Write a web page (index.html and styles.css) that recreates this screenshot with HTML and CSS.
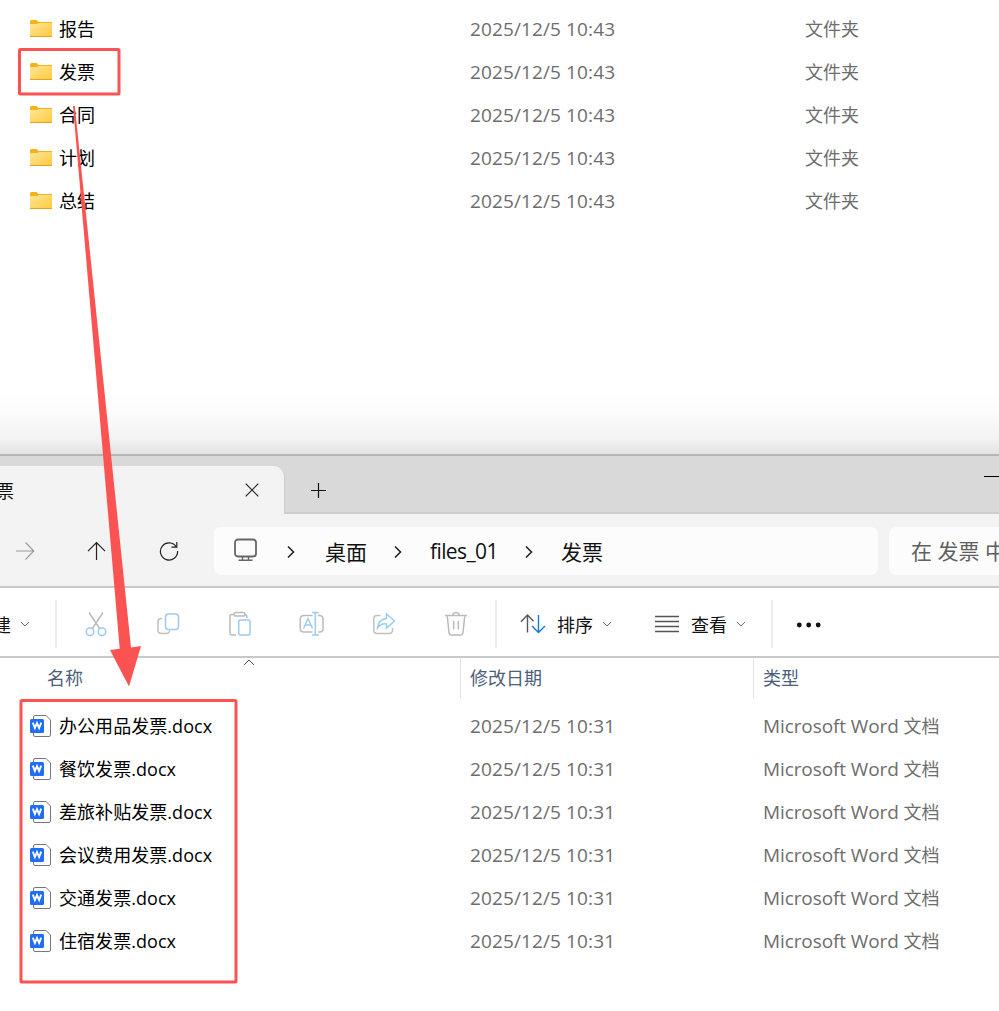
FILE: index.html
```
<!DOCTYPE html>
<html lang="zh-CN">
<head>
    <meta charset="UTF-8">
    <meta name="viewport" content="width=device-width, initial-scale=1.0">
    <title>发票</title>
    <link rel="stylesheet" href="styles.css">
</head>
<body>
<!-- Shared icons -->
<svg class="defs" width="0" height="0">
    <defs>
        <linearGradient id="folderFill" x1="0" y1="0" x2="1" y2="1">
            <stop offset="0" stop-color="#ffe69b"/>
            <stop offset="1" stop-color="#ffc93a"/>
        </linearGradient>
        <symbol id="folder" viewBox="0 0 22 18">
            <path d="M0 1.5Q0 0 1.5 0H6.5L8.5 2H22V6H0Z" fill="#f5b21b"/>
            <path d="M0 4H7L9 3H22V17H0Z" fill="url(#folderFill)"/>
            <path d="M0 16.5H22" stroke="#e5a21c"/>
        </symbol>
        <symbol id="word" viewBox="0 0 22 22">
            <path d="M3.5 4V2Q3.5 .5 5 .5H16L20.5 5V20Q20.5 21.5 19 21.5H5Q3.5 21.5 3.5 20V18" fill="#fff" stroke="#777"/>
            <rect y="4" width="14" height="14" rx="1.5" fill="#1f6ef5"/>
            <path d="M2.8 7.6L4.9 13L7 8.2L9.1 13L11.2 7.6" fill="none" stroke="#fff" stroke-width="1.9"/>
        </symbol>
        <symbol id="down" viewBox="0 0 10 6">
            <path d="M1 1L5 5L9 1" fill="none" stroke="#666"/>
        </symbol>
        <symbol id="right" viewBox="0 0 8 14">
            <path d="M1 1.5L6.5 7L1 12.5" fill="none" stroke="#222" stroke-width="1.6"/>
        </symbol>
    </defs>
</svg>

<div class="desktop">
    <!-- Parent folder list -->
    <div class="parent-window">
        <div class="row"><div class="name"><svg class="folder"><use href="#folder"/></svg>报告</div><div class="date">2025/12/5 10:43</div><div class="type">文件夹</div></div>
        <div class="row"><div class="name"><svg class="folder"><use href="#folder"/></svg>发票</div><div class="date">2025/12/5 10:43</div><div class="type">文件夹</div></div>
        <div class="row"><div class="name"><svg class="folder"><use href="#folder"/></svg>合同</div><div class="date">2025/12/5 10:43</div><div class="type">文件夹</div></div>
        <div class="row"><div class="name"><svg class="folder"><use href="#folder"/></svg>计划</div><div class="date">2025/12/5 10:43</div><div class="type">文件夹</div></div>
        <div class="row"><div class="name"><svg class="folder"><use href="#folder"/></svg>总结</div><div class="date">2025/12/5 10:43</div><div class="type">文件夹</div></div>
    </div>

    <div class="window">
        <!-- Tabs -->
        <div class="tabs">
            <div class="tab">
                <span class="tab-title">发票</span>
                <svg width="14" height="14" viewBox="0 0 14 14"><path d="M.7 .7L13.3 13.3M13.3 .7L.7 13.3" stroke="#222" stroke-width="1.2"/></svg>
            </div>
            <svg class="new-tab" width="15" height="15" viewBox="0 0 15 15"><path d="M7.5 0V15M0 7.5H15" stroke="#111" stroke-width="1.2"/></svg>
            <span class="minimize"></span>
        </div>

        <!-- Address bar -->
        <div class="nav">
            <div class="nav-button"><svg width="20" height="20" viewBox="0 0 20 20" fill="none" stroke="#999" stroke-width="1.1"><path d="M1 10H18.5M10.5 1.5L18.8 10L10.5 18.5"/></svg></div>
            <div class="nav-button"><svg width="20" height="20" viewBox="0 0 20 20" fill="none" stroke="#222" stroke-width="1.2"><path d="M10.5 19V1.8M2 10.2L10.5 1.7L19 10.2"/></svg></div>
            <div class="nav-button refresh"><svg width="20" height="20" viewBox="0 0 20 20" fill="none" stroke="#222" stroke-width="1.2"><path d="M17.4 6A8.6 8.6 0 1 0 18.6 10M17.8 1V6.2H12.5"/></svg></div>
            <div class="address">
                <svg class="monitor" width="24" height="24" viewBox="0 0 24 24" fill="none" stroke="#666" stroke-width="1.8"><rect x="2" y="1.5" width="21" height="17" rx="3"/><path d="M9.5 18.5V22M15.5 18.5V22M5.5 22.3H19.5" stroke-width="1.4"/></svg>
                <svg class="sep sep-first"><use href="#right"/></svg>
                <span>桌面</span>
                <svg class="sep"><use href="#right"/></svg>
                <span class="latin">files_01</span>
                <svg class="sep"><use href="#right"/></svg>
                <span>发票</span>
            </div>
            <div class="search">在 发票 中搜索</div>
        </div>

        <!-- Toolbar -->
        <div class="toolbar">
            <div class="new"><span>新建</span><svg class="down"><use href="#down"/></svg></div>
            <div class="tools">
                <!-- cut -->
                <svg viewBox="0 0 26 26"><path d="M6 1.5L17 18M20 1.5L9 18" stroke="#bbb"/><circle cx="7" cy="20.8" r="3.8" stroke="#9ccbf0"/><circle cx="19" cy="20.8" r="3.8" stroke="#9ccbf0"/></svg>
                <!-- copy -->
                <svg viewBox="0 0 26 26"><path d="M7 7.5H6Q3 7.5 3 10.5V19Q3 22.5 6.5 22.5H11Q14.5 22.5 14.5 19.5" stroke="#c0c0c0"/><rect x="10.5" y="3" width="13" height="15.5" rx="3" stroke="#9ccbf0"/></svg>
                <!-- paste -->
                <svg viewBox="0 0 26 26"><path d="M9 24H5Q3 24 3 22V5Q3 3.5 5 3.5H7M18 3.5Q20 3.5 20 7" stroke="#bbb"/><rect x="7" y="1.5" width="11" height="3.6" rx="1.8" stroke="#bbb"/><rect x="11.7" y="9" width="11.3" height="15" rx="1.6" stroke="#9ccbf0"/></svg>
                <!-- rename -->
                <svg viewBox="0 0 26 26"><path d="M13.5 4.5H5Q1.3 4.5 1.3 8V18Q1.3 21 5 21H13.5M19 4.5H20.5Q24 4.5 24 8V18Q24 21 20.5 21H19" stroke="#bbb"/><path d="M4.5 17.5L9 7.5L13.5 17.5M6 14H12M13 1.5H20M13 24H20M16.3 1.5V24" stroke="#9ccbf0"/></svg>
                <!-- share -->
                <svg viewBox="0 0 26 26"><path d="M9.5 4.5H6Q2.8 4.5 2.8 8V19Q2.8 22.5 6 22.5H18Q21.5 22.5 21.5 19V17" stroke="#c0c0c0"/><path d="M15.5 3L23.5 10L15.5 17V13Q10 12 6.5 17Q7 8.5 15.5 7.5Z" stroke="#9ccbf0"/></svg>
                <!-- delete -->
                <svg viewBox="0 0 26 26"><path d="M2 4.5H24M9.5 4.5Q10 1.5 13 1.5T16.5 4.5M4.2 4.5L6 21.5Q6.3 24 8.5 24H17.5Q19.7 24 20 21.5L21.8 4.5M10.7 10V18.5M15.3 10V18.5" stroke="#bbb"/></svg>
            </div>
            <div class="menus">
                <svg width="26" height="22" viewBox="0 0 26 22" fill="none" stroke-width="1.4"><path d="M7.5 19.5V2M1 8.7L7.5 2L13.5 8.2" stroke="#555"/><path d="M18.5 2V19.5M12 13L18.5 19.5L25 13" stroke="#0f7bd6"/></svg>
                <span class="sort">排序</span>
                <svg class="down"><use href="#down"/></svg>
                <svg class="lines" width="24" height="18" viewBox="0 0 24 18"><path d="M0 1.5H24M0 6.5H24M0 11.5H24M0 16.5H24" stroke="#555" stroke-width="1.3"/></svg>
                <span class="view">查看</span>
                <svg class="down"><use href="#down"/></svg>
            </div>
            <svg class="more" width="26" height="6" viewBox="0 0 26 6"><circle cx="3.3" cy="3" r="2.4"/><circle cx="12.7" cy="3" r="2.4"/><circle cx="22.2" cy="3" r="2.4"/></svg>
        </div>

        <!-- Column headers -->
        <div class="columns">
            <div class="col-name">名称<svg class="up" width="12" height="7" viewBox="0 0 12 7"><path d="M1 6L6 1L11 6" fill="none" stroke="#555"/></svg></div>
            <div class="col-date">修改日期</div>
            <div class="col-type">类型</div>
        </div>

        <div class="files">
            <div class="row"><div class="name"><svg class="word"><use href="#word"/></svg>办公用品发票.docx</div><div class="date">2025/12/5 10:31</div><div class="type"><span>Microsoft Word </span>文档</div></div>
            <div class="row"><div class="name"><svg class="word"><use href="#word"/></svg>餐饮发票.docx</div><div class="date">2025/12/5 10:31</div><div class="type"><span>Microsoft Word </span>文档</div></div>
            <div class="row"><div class="name"><svg class="word"><use href="#word"/></svg>差旅补贴发票.docx</div><div class="date">2025/12/5 10:31</div><div class="type"><span>Microsoft Word </span>文档</div></div>
            <div class="row"><div class="name"><svg class="word"><use href="#word"/></svg>会议费用发票.docx</div><div class="date">2025/12/5 10:31</div><div class="type"><span>Microsoft Word </span>文档</div></div>
            <div class="row"><div class="name"><svg class="word"><use href="#word"/></svg>交通发票.docx</div><div class="date">2025/12/5 10:31</div><div class="type"><span>Microsoft Word </span>文档</div></div>
            <div class="row"><div class="name"><svg class="word"><use href="#word"/></svg>住宿发票.docx</div><div class="date">2025/12/5 10:31</div><div class="type"><span>Microsoft Word </span>文档</div></div>
        </div>
    </div>

    <!-- Red marks over both windows -->
    <svg class="marks" width="999" height="1011" viewBox="0 0 999 1011">
        <rect x="19.5" y="49.5" width="99.5" height="44.5" rx="1"/>
        <rect x="21" y="700.5" width="215" height="281.5" rx="1"/>
        <path d="M73 106H74.8L131 647.5L141 646L129 686.5L110 650L119.7 648.7Z"/>
    </svg>
</div>
</body>
</html>
```
FILE: styles.css
```
* {
    box-sizing: border-box;
}

body {
    margin: 0;
    background: #fff;
    font-family: "Open Sans", "Noto Sans CJK SC", sans-serif;
    font-size: 18px;
    font-weight: 400;
    color: #111;
}

svg {
    display: block;
    flex-shrink: 0;
}

.defs {
    position: absolute;
}

.desktop {
    position: relative;
    width: 999px;
    height: 1011px;
    overflow: hidden;
    white-space: nowrap;
}

/* Parent folder */
.parent-window {
    height: 454px;
    padding-top: 7px;
    background: linear-gradient(#fff 390px, #fbfbfb 415px, #f3f3f3 438px, #e3e3e3 454px);
}

.row {
    display: flex;
    align-items: center;
    height: 43px;
    line-height: 42px;
}

.name {
    display: flex;
    align-items: center;
    width: 470px;
    padding-left: 30px;
    color: #000;
    letter-spacing: 0.05px;
}

.folder {
    width: 22px;
    height: 18px;
    margin: 1px 7px 0 0;
}

.word {
    width: 22px;
    height: 22px;
    margin-right: 7px;
}

.date {
    width: 335px;
    color: #6d6d6d;
    font-size: 19px;
    letter-spacing: 0.12px;
}

.type {
    color: #6d6d6d;
}

.type span {
    font-size: 19px;
    letter-spacing: -0.1px;
    white-space: pre;
}

/* Front window */
.window {
    border-top: 2px solid #b5b5b5;
    background: #fff;
}

.tabs {
    display: flex;
    height: 58px;
    background: linear-gradient(#d9d9d9 56px, #cdcdcd 56px);
}

.tab {
    display: flex;
    align-items: center;
    justify-content: space-between;
    width: 285px;
    height: 48px;
    margin-top: 10px;
    padding: 0 25px 1px 0;
    background: #f3f3f3;
    border-top-right-radius: 11px;
    border-right: 1px solid #cdcdcd;
}

.tab-title {
    margin-left: -22px;
}

.new-tab {
    margin: 27px 0 0 26px;
}

.minimize {
    width: 15px;
    height: 1px;
    margin: 20px 0 0 auto;
    background: #000;
}

.nav {
    display: flex;
    align-items: center;
    height: 74px;
    padding-top: 1px;
    background: #f3f3f3;
    border-bottom: 2px solid #c8c8c8;
    font-size: 21px;
}

.nav-button {
    width: 72px;
    padding-left: 15px;
}

.nav-button + .nav-button {
    padding-left: 14px;
}

.nav-button + .refresh {
    padding-left: 15px;
}

.address {
    display: flex;
    align-items: center;
    width: 664px;
    height: 48px;
    margin-left: -2px;
    padding-left: 19px;
    background: #fcfcfc;
    border-radius: 7px;
}

.monitor {
    margin-top: -1px;
}

.sep {
    width: 8px;
    height: 14px;
    margin: 2px 28px 0 27px;
}

.sep-first {
    margin: 2px 30px 0 30px;
}

.latin {
    letter-spacing: -0.6px;
}

.search {
    flex: 1;
    height: 48px;
    margin-left: 11px;
    padding-left: 22px;
    line-height: 48px;
    overflow: hidden;
    color: #5f5f5f;
    background: #fcfcfc;
    border-radius: 7px 0 0 7px;
}

.toolbar {
    display: flex;
    align-items: center;
    height: 70px;
    border-bottom: 2px solid #c8c8c8;
}

.down {
    width: 10px;
    height: 6px;
}

.new {
    display: flex;
    align-items: center;
    gap: 9px;
    width: 57px;
    height: 48px;
    margin-top: 4px;
    border-right: 2px solid #eee;
}

.new span {
    margin-left: -25px;
}

.tools {
    display: flex;
    align-items: center;
    gap: 46px;
    width: 440px;
    height: 48px;
    margin-top: 4px;
    padding-left: 26px;
    border-right: 2px solid #eee;
}

.tools svg {
    width: 26px;
    height: 26px;
    fill: none;
    stroke-width: 1.5;
}

.menus {
    display: flex;
    align-items: center;
    width: 276px;
    height: 48px;
    margin-top: 4px;
    padding-left: 23px;
    border-right: 2px solid #eee;
}

.sort {
    margin: 0 9px 0 11px;
}

.lines {
    margin-left: 43px;
}

.view {
    margin: 0 9px 0 12px;
}

.more {
    margin: 6px 0 0 23px;
    fill: #111;
}

.columns {
    display: flex;
    height: 40px;
    line-height: 40px;
    color: #4c607a;
}

.col-name {
    position: relative;
    width: 461px;
    padding-left: 47px;
    border-right: 1px solid #e3e3e3;
}

.up {
    position: absolute;
    left: 243px;
    top: 1px;
}

.col-date {
    width: 293px;
    padding-left: 9px;
    border-right: 1px solid #e3e3e3;
}

.col-type {
    padding-left: 9px;
}

.files {
    padding-top: 6px;
}

.files .date {
    width: 293px;
}

/* Highlight boxes and arrow */
.marks {
    position: absolute;
    left: 0;
    top: 0;
}

.marks rect {
    fill: none;
    stroke: #fb5252;
    stroke-width: 3;
}

.marks path {
    fill: #fb5252;
}
```
